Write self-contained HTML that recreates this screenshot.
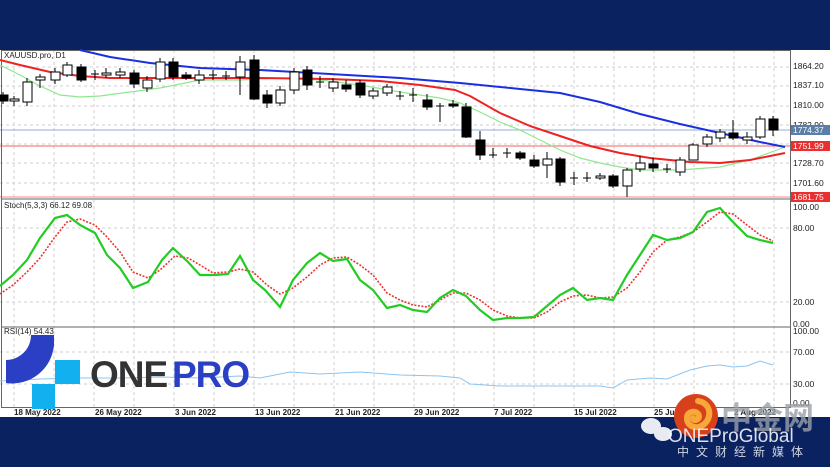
<!DOCTYPE html>
<html><head><meta charset="utf-8"><style>
html,body{margin:0;padding:0;width:830px;height:467px;overflow:hidden;background:#0b2260;}
svg{display:block}
</style></head><body>
<svg width="830" height="467" viewBox="0 0 830 467" xmlns="http://www.w3.org/2000/svg" font-family="Liberation Sans, sans-serif">
<rect x="0" y="0" width="830" height="467" fill="#0b2260"/>
<rect x="0" y="50" width="830" height="367" fill="#ffffff"/>
<g stroke="#cfcfcf" stroke-width="1" stroke-dasharray="3,3">
<line x1="14" y1="50" x2="14" y2="408"/><line x1="54" y1="50" x2="54" y2="408"/><line x1="94" y1="50" x2="94" y2="408"/><line x1="134" y1="50" x2="134" y2="408"/><line x1="174" y1="50" x2="174" y2="408"/><line x1="214" y1="50" x2="214" y2="408"/><line x1="254" y1="50" x2="254" y2="408"/><line x1="294" y1="50" x2="294" y2="408"/><line x1="334" y1="50" x2="334" y2="408"/><line x1="374" y1="50" x2="374" y2="408"/><line x1="414" y1="50" x2="414" y2="408"/><line x1="454" y1="50" x2="454" y2="408"/><line x1="494" y1="50" x2="494" y2="408"/><line x1="534" y1="50" x2="534" y2="408"/><line x1="574" y1="50" x2="574" y2="408"/><line x1="614" y1="50" x2="614" y2="408"/><line x1="654" y1="50" x2="654" y2="408"/><line x1="694" y1="50" x2="694" y2="408"/><line x1="734" y1="50" x2="734" y2="408"/><line x1="774" y1="50" x2="774" y2="408"/>
<line x1="0" y1="67" x2="790" y2="67"/><line x1="0" y1="86" x2="790" y2="86"/><line x1="0" y1="106" x2="790" y2="106"/><line x1="0" y1="125" x2="790" y2="125"/><line x1="0" y1="144" x2="790" y2="144"/><line x1="0" y1="163" x2="790" y2="163"/><line x1="0" y1="183" x2="790" y2="183"/>
<line x1="0" y1="228" x2="790" y2="228"/><line x1="0" y1="302" x2="790" y2="302"/>
<line x1="0" y1="352" x2="790" y2="352"/><line x1="0" y1="384" x2="790" y2="384"/>
</g>
<line x1="0" y1="130" x2="790" y2="130" stroke="#8fb0d8" stroke-width="1"/>
<line x1="0" y1="146" x2="790" y2="146" stroke="#f58080" stroke-width="1.3"/>
<line x1="0" y1="197" x2="790" y2="197" stroke="#f8a0a0" stroke-width="1.3"/>
<g stroke="#666" stroke-width="1" fill="none">
<rect x="1.5" y="50.5" width="789" height="357"/>
<line x1="1" y1="199" x2="790" y2="199"/>
<line x1="1" y1="327" x2="790" y2="327"/>
</g>
<polyline fill="none" stroke="#8ee88e" stroke-width="1.2" points="0,65 20,75 40,86 60,95 80,97 100,96 130,92 160,88 200,80 240,80 280,78 320,80 360,85 400,92 440,98 460,103 480,112 500,122 520,130 540,140 560,150 580,158 600,163 620,167 640,170 680,170 720,167 750,160 785,147"/>
<polyline fill="none" stroke="#ee2222" stroke-width="2" points="0,60 20,65 50,72 80,76 110,78 160,78 200,78 260,78 330,79 380,81 420,85 455,90 470,96 500,113 530,126 560,136 590,146 620,153 650,158 690,162 720,163 750,160 785,153"/>
<polyline fill="none" stroke="#1a2fe0" stroke-width="2" points="80,50 110,57 150,63 200,68 260,70 330,74 400,78 460,83 520,89 560,93 600,102 640,114 680,124 720,133 760,142 785,147"/>
<g stroke="#000" stroke-width="1">
<line x1="3" y1="92" x2="3" y2="104"/><rect x="-1" y="95" width="9" height="6" fill="#000"/>
<line x1="14" y1="96" x2="14" y2="106"/><rect x="10" y="99" width="9" height="2" fill="#fff"/>
<line x1="27" y1="78" x2="27" y2="106"/><rect x="23" y="82" width="9" height="20" fill="#fff"/>
<line x1="40" y1="74" x2="40" y2="88"/><rect x="36" y="77" width="9" height="3" fill="#fff"/>
<line x1="55" y1="68" x2="55" y2="84"/><rect x="51" y="72" width="9" height="8" fill="#fff"/>
<line x1="67" y1="62" x2="67" y2="77"/><rect x="63" y="65" width="9" height="10" fill="#fff"/>
<line x1="81" y1="64" x2="81" y2="82"/><rect x="77" y="67" width="9" height="13" fill="#000"/>
<line x1="95" y1="70" x2="95" y2="80"/><line x1="91" y1="74" x2="99" y2="74"/>
<line x1="106" y1="68" x2="106" y2="78"/><rect x="102" y="73" width="9" height="2" fill="#fff"/>
<line x1="120" y1="68" x2="120" y2="78"/><rect x="116" y="72" width="9" height="3" fill="#fff"/>
<line x1="134" y1="70" x2="134" y2="88"/><rect x="130" y="73" width="9" height="11" fill="#000"/>
<line x1="147" y1="76" x2="147" y2="92"/><rect x="143" y="80" width="9" height="8" fill="#fff"/>
<line x1="160" y1="58" x2="160" y2="82"/><rect x="156" y="62" width="9" height="17" fill="#fff"/>
<line x1="173" y1="58" x2="173" y2="80"/><rect x="169" y="62" width="9" height="15" fill="#000"/>
<line x1="186" y1="72" x2="186" y2="80"/><rect x="182" y="75" width="9" height="3" fill="#000"/>
<line x1="199" y1="70" x2="199" y2="84"/><rect x="195" y="75" width="9" height="5" fill="#fff"/>
<line x1="213" y1="70" x2="213" y2="80"/><line x1="209" y1="75" x2="217" y2="75"/>
<line x1="226" y1="71" x2="226" y2="80"/><line x1="222" y1="76" x2="230" y2="76"/>
<line x1="240" y1="56" x2="240" y2="95"/><rect x="236" y="62" width="9" height="15" fill="#fff"/>
<line x1="254" y1="55" x2="254" y2="100"/><rect x="250" y="60" width="9" height="39" fill="#000"/>
<line x1="267" y1="90" x2="267" y2="108"/><rect x="263" y="95" width="9" height="8" fill="#000"/>
<line x1="280" y1="86" x2="280" y2="106"/><rect x="276" y="90" width="9" height="13" fill="#fff"/>
<line x1="294" y1="68" x2="294" y2="94"/><rect x="290" y="72" width="9" height="18" fill="#fff"/>
<line x1="307" y1="66" x2="307" y2="90"/><rect x="303" y="70" width="9" height="15" fill="#000"/>
<line x1="320" y1="76" x2="320" y2="88"/><line x1="316" y1="82" x2="324" y2="82"/>
<line x1="333" y1="78" x2="333" y2="92"/><rect x="329" y="82" width="9" height="6" fill="#fff"/>
<line x1="346" y1="80" x2="346" y2="92"/><rect x="342" y="85" width="9" height="4" fill="#000"/>
<line x1="360" y1="80" x2="360" y2="98"/><rect x="356" y="83" width="9" height="12" fill="#000"/>
<line x1="373" y1="88" x2="373" y2="99"/><rect x="369" y="91" width="9" height="5" fill="#fff"/>
<line x1="387" y1="84" x2="387" y2="96"/><rect x="383" y="87" width="9" height="6" fill="#fff"/>
<line x1="400" y1="91" x2="400" y2="100"/><line x1="396" y1="96" x2="404" y2="96"/>
<line x1="413" y1="88" x2="413" y2="102"/><line x1="409" y1="95" x2="417" y2="95"/>
<line x1="427" y1="94" x2="427" y2="110"/><rect x="423" y="100" width="9" height="7" fill="#000"/>
<line x1="440" y1="103" x2="440" y2="122"/><line x1="436" y1="106" x2="444" y2="106"/>
<line x1="453" y1="100" x2="453" y2="108"/><rect x="449" y="104" width="9" height="2" fill="#000"/>
<line x1="466" y1="103" x2="466" y2="138"/><rect x="462" y="107" width="9" height="30" fill="#000"/>
<line x1="480" y1="131" x2="480" y2="160"/><rect x="476" y="140" width="9" height="15" fill="#000"/>
<line x1="493" y1="148" x2="493" y2="158"/><line x1="489" y1="155" x2="497" y2="155"/>
<line x1="507" y1="148" x2="507" y2="158"/><line x1="503" y1="153" x2="511" y2="153"/>
<line x1="520" y1="151" x2="520" y2="160"/><rect x="516" y="153" width="9" height="5" fill="#000"/>
<line x1="534" y1="155" x2="534" y2="168"/><rect x="530" y="160" width="9" height="6" fill="#000"/>
<line x1="547" y1="152" x2="547" y2="178"/><rect x="543" y="159" width="9" height="6" fill="#fff"/>
<line x1="560" y1="157" x2="560" y2="186"/><rect x="556" y="159" width="9" height="23" fill="#000"/>
<line x1="574" y1="172" x2="574" y2="185"/><line x1="570" y1="178" x2="578" y2="178"/>
<line x1="587" y1="172" x2="587" y2="182"/><line x1="583" y1="178" x2="591" y2="178"/>
<line x1="600" y1="173" x2="600" y2="180"/><rect x="596" y="176" width="9" height="2" fill="#fff"/>
<line x1="613" y1="174" x2="613" y2="188"/><rect x="609" y="176" width="9" height="10" fill="#000"/>
<line x1="627" y1="168" x2="627" y2="197"/><rect x="623" y="170" width="9" height="16" fill="#fff"/>
<line x1="640" y1="156" x2="640" y2="172"/><rect x="636" y="163" width="9" height="6" fill="#fff"/>
<line x1="653" y1="158" x2="653" y2="172"/><rect x="649" y="164" width="9" height="4" fill="#000"/>
<line x1="667" y1="164" x2="667" y2="173"/><line x1="663" y1="169" x2="671" y2="169"/>
<line x1="680" y1="157" x2="680" y2="176"/><rect x="676" y="160" width="9" height="12" fill="#fff"/>
<line x1="693" y1="143" x2="693" y2="160"/><rect x="689" y="145" width="9" height="15" fill="#fff"/>
<line x1="707" y1="134" x2="707" y2="147"/><rect x="703" y="137" width="9" height="7" fill="#fff"/>
<line x1="720" y1="129" x2="720" y2="142"/><rect x="716" y="132" width="9" height="6" fill="#fff"/>
<line x1="733" y1="120" x2="733" y2="140"/><rect x="729" y="133" width="9" height="5" fill="#000"/>
<line x1="747" y1="132" x2="747" y2="144"/><rect x="743" y="137" width="9" height="3" fill="#fff"/>
<line x1="760" y1="116" x2="760" y2="139"/><rect x="756" y="119" width="9" height="18" fill="#fff"/>
<line x1="773" y1="116" x2="773" y2="136"/><rect x="769" y="119" width="9" height="11" fill="#000"/>
</g>
<polyline fill="none" stroke="#ee3333" stroke-width="1.6" stroke-dasharray="2,1.5" points="0,294 13,285 27,272 40,258 55,237 67,222 80,219 95,225 107,237 120,252 133,272 148,278 160,270 175,256 188,258 200,265 213,273 228,272 240,269 253,272 267,285 280,294 293,288 307,277 320,265 333,258 347,257 360,265 373,275 387,293 400,300 413,305 427,307 440,300 453,293 466,293 480,300 493,310 507,316 520,318 534,318 547,312 560,302 573,296 587,295 600,298 613,297 627,288 640,272 653,252 667,240 680,237 693,232 707,222 720,212 733,214 747,225 760,235 773,241"/>
<polyline fill="none" stroke="#22cc22" stroke-width="2.2" points="0,286 13,275 27,260 40,238 55,218 67,215 80,225 95,233 107,255 120,268 133,288 148,282 162,260 173,248 188,262 200,275 215,275 228,274 240,256 253,280 265,290 280,307 293,280 307,263 320,253 333,261 347,259 360,280 373,290 387,308 400,305 413,310 427,312 440,298 453,290 466,296 480,310 493,320 507,318 520,318 534,317 547,306 560,295 573,288 587,300 600,298 613,300 627,275 640,255 653,235 667,240 680,238 693,232 707,212 720,208 733,222 747,236 760,240 773,243"/>
<polyline fill="none" stroke="#8cc4f0" stroke-width="1" points="0,381 40,379 80,378 120,378 160,377 200,378 240,376 260,378 290,372 320,374 360,372 400,375 440,376 460,378 470,384 500,386 540,386 580,386 600,386 613,388 627,380 650,378 667,379 690,370 707,366 720,365 733,367 747,366 760,361 773,365"/>
<g font-size="8" fill="#222">
<text x="4" y="58">XAUUSD.pro, D1</text>
<text x="4" y="208">Stoch(5,3,3) 66.12 69.08</text>
<text x="4" y="334">RSI(14) 54.43</text>
</g>
<g font-size="8.5" fill="#222">
<text x="793" y="69">1864.20</text><text x="793" y="88">1837.10</text><text x="793" y="108">1810.00</text><text x="793" y="128">1782.90</text><text x="793" y="166">1728.70</text><text x="793" y="186">1701.60</text>
<text x="793" y="210">100.00</text><text x="793" y="231">80.00</text><text x="793" y="305">20.00</text><text x="793" y="327">0.00</text>
<text x="793" y="334">100.00</text><text x="793" y="355">70.00</text><text x="793" y="387">30.00</text><text x="793" y="406">0.00</text>
</g>
<rect x="791" y="125" width="39" height="10" fill="#5a7ea8"/><text x="793" y="133" font-size="8.5" fill="#fff">1774.37</text>
<rect x="791" y="141" width="39" height="10" fill="#e83030"/><text x="793" y="149" font-size="8.5" fill="#fff">1751.99</text>
<rect x="791" y="192" width="39" height="10" fill="#e83030"/><text x="793" y="200" font-size="8.5" fill="#fff">1681.75</text>
<g font-size="8" fill="#222" font-weight="bold">
<text x="14" y="415">18 May 2022</text><text x="95" y="415">26 May 2022</text><text x="175" y="415">3 Jun 2022</text><text x="255" y="415">13 Jun 2022</text><text x="335" y="415">21 Jun 2022</text><text x="414" y="415">29 Jun 2022</text><text x="494" y="415">7 Jul 2022</text><text x="574" y="415">15 Jul 2022</text><text x="654" y="415">25 Jul 2022</text><text x="734" y="415">2 Aug 2022</text>
</g>
<path d="M31,335 L54,335 L54,345 A42,42 0 0 1 6,383 L6,360 A25,25 0 0 0 31,335 Z" fill="#2a3fc4"/>
<rect x="55" y="360" width="25" height="24" fill="#12b0ef"/>
<rect x="32" y="384" width="23" height="25" fill="#12b0ef"/>
<text x="90" y="387" font-size="37" font-weight="bold" fill="#333" letter-spacing="-1">ONE</text>
<text x="172" y="387" font-size="37" font-weight="bold" fill="#2a3fc4" letter-spacing="-1">PRO</text>
<circle cx="696" cy="416" r="22" fill="#d8401c"/>
<path d="M698,401 C711,403 713,418 703,425 C696,430 686,426 687,417 C688,410 699,410 699,417 C698,421 693,421 693,418" fill="none" stroke="#f7a838" stroke-width="6" stroke-linecap="round"/>
<text x="721" y="429" font-size="31" font-weight="bold" fill="#9aa0a8" fill-opacity="0.8" font-family="Liberation Sans, Noto Sans CJK SC, sans-serif">中金网</text>
<g fill="#e8ecf2"><ellipse cx="651" cy="426" rx="10" ry="8"/><ellipse cx="663" cy="434" rx="9" ry="7"/></g>
<text x="668" y="442" font-size="19" fill="#f2f4f8" fill-opacity="0.9">ONEProGlobal</text>
<text x="677" y="456" font-size="12" fill="#cfd5e0" letter-spacing="7" font-family="Liberation Sans, Noto Sans CJK SC, sans-serif">中文财经新媒体</text>
</svg>
</body></html>
